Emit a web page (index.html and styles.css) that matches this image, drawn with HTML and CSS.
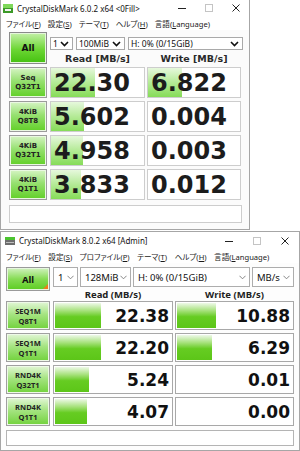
FILE: index.html
```html
<!DOCTYPE html>
<html>
<head>
  <meta charset="UTF-8">
  <title>CrystalDiskMark</title>
  <link rel="stylesheet" href="styles.css">
</head>
<body>
  <!-- CrystalDiskMark 6 -->
  <div class="win win6">
    <div class="titlebar">
      <svg class="appicon" viewBox="0 0 10 9" width="10" height="9">
        <rect x="0" y="0" width="10" height="9" fill="#3c9a28"/>
        <rect x="0" y="0" width="10" height="4" fill="#7fd85a"/>
        <rect x="2" y="5" width="6" height="2" fill="#f2f2f2"/>
      </svg>
      <span class="title">CrystalDiskMark 6.0.2 x64 &lt;0Fill&gt;</span>
      <div class="controls">
        <span class="ctl"><svg viewBox="0 0 8 8" width="8" height="8"><line x1="0" y1="4.5" x2="8" y2="4.5" stroke="#222" stroke-width="1"/></svg></span>
        <span class="ctl"><svg viewBox="0 0 8 8" width="8" height="8"><rect x="0.5" y="0.5" width="7" height="7" fill="none" stroke="#c4c4c4" stroke-width="1"/></svg></span>
        <span class="ctl"><svg viewBox="0 0 8 8" width="8" height="8"><path d="M0.5 0.5 L7.5 7.5 M7.5 0.5 L0.5 7.5" stroke="#222" stroke-width="1"/></svg></span>
      </div>
    </div>
    <div class="menubar menu6">
      <span>ファイル(<u>F</u>)</span>
      <span>設定(<u>S</u>)</span>
      <span>テーマ(<u>T</u>)</span>
      <span>ヘルプ(<u>H</u>)</span>
      <span>言語(<u>L</u>anguage)</span>
    </div>
    <div class="body6">
      <div class="top6">
        <div class="all6">All</div>
        <div class="head6">
          <div class="selects6">
            <div class="sel6 w-count"><span>1</span><svg viewBox="0 0 9 6" width="9" height="6"><polyline points="1,1 4.5,4.5 8,1" fill="none" stroke="#111" stroke-width="1.6"/></svg></div>
            <div class="sel6 w-size"><span>100MiB</span><svg viewBox="0 0 9 6" width="9" height="6"><polyline points="1,1 4.5,4.5 8,1" fill="none" stroke="#111" stroke-width="1.6"/></svg></div>
            <div class="sel6 w-drive"><span>H: 0% (0/15GiB)</span><svg viewBox="0 0 9 6" width="9" height="6"><polyline points="1,1 4.5,4.5 8,1" fill="none" stroke="#111" stroke-width="1.6"/></svg></div>
          </div>
          <div class="cols6">
            <span class="c-read">Read [MB/s]</span>
            <span class="c-write">Write [MB/s]</span>
          </div>
        </div>
      </div>

      <div class="rows6">
        <div class="row6">
          <div class="lbl6">Seq<br>Q32T1</div>
          <div class="val6 c-read"><div class="bar6" style="width:44px"></div><span>22.30</span></div>
          <div class="val6 c-write"><div class="bar6" style="width:34px"></div><span>6.822</span></div>
        </div>
        <div class="row6">
          <div class="lbl6">4KiB<br>Q8T8</div>
          <div class="val6 c-read"><div class="bar6" style="width:33px"></div><span>5.602</span></div>
          <div class="val6 c-write"><span>0.004</span></div>
        </div>
        <div class="row6">
          <div class="lbl6">4KiB<br>Q32T1</div>
          <div class="val6 c-read"><div class="bar6" style="width:32px"></div><span>4.958</span></div>
          <div class="val6 c-write"><span>0.003</span></div>
        </div>
        <div class="row6">
          <div class="lbl6">4KiB<br>Q1T1</div>
          <div class="val6 c-read"><div class="bar6" style="width:30px"></div><span>3.833</span></div>
          <div class="val6 c-write"><span>0.012</span></div>
        </div>
      </div>
      <div class="comment6"></div>
    </div>
  </div>

  <!-- CrystalDiskMark 8 -->
  <div class="win win8">
    <div class="titlebar">
      <svg class="appicon" viewBox="0 0 10 9" width="10" height="9">
        <rect x="0" y="1" width="10" height="8" fill="#6d6d6d"/>
        <rect x="0" y="1" width="10" height="3" fill="#4cc430"/>
        <rect x="1" y="6" width="8" height="1" fill="#bdbdbd"/>
      </svg>
      <span class="title">CrystalDiskMark 8.0.2 x64 [Admin]</span>
      <div class="controls">
        <span class="ctl"><svg viewBox="0 0 8 8" width="8" height="8"><line x1="0" y1="4.5" x2="8" y2="4.5" stroke="#222" stroke-width="1"/></svg></span>
        <span class="ctl"><svg viewBox="0 0 8 8" width="8" height="8"><rect x="0.5" y="0.5" width="7" height="7" fill="none" stroke="#c4c4c4" stroke-width="1"/></svg></span>
        <span class="ctl"><svg viewBox="0 0 8 8" width="8" height="8"><path d="M0.5 0.5 L7.5 7.5 M7.5 0.5 L0.5 7.5" stroke="#222" stroke-width="1"/></svg></span>
      </div>
    </div>
    <div class="menubar menu8">
      <span>ファイル(<u>F</u>)</span>
      <span>設定(<u>S</u>)</span>
      <span>プロファイル(<u>P</u>)</span>
      <span>テーマ(<u>T</u>)</span>
      <span>ヘルプ(<u>H</u>)</span>
      <span>言語(<u>L</u>anguage)</span>
    </div>
    <div class="body8">
      <div class="top8">
        <div class="all8">All<span class="corner"></span></div>
        <div class="head8">
          <div class="selects8">
            <div class="sel8 w-count"><span>1</span><svg viewBox="0 0 8 5" width="7" height="5"><polyline points="0.5,0.5 4,4 7.5,0.5" fill="none" stroke="#777" stroke-width="1"/></svg></div>
            <div class="sel8 w-size"><span>128MiB</span><svg viewBox="0 0 8 5" width="7" height="5"><polyline points="0.5,0.5 4,4 7.5,0.5" fill="none" stroke="#777" stroke-width="1"/></svg></div>
            <div class="sel8 w-drive"><span>H: 0% (0/15GiB)</span><svg viewBox="0 0 8 5" width="7" height="5"><polyline points="0.5,0.5 4,4 7.5,0.5" fill="none" stroke="#777" stroke-width="1"/></svg></div>
            <div class="sel8 w-unit"><span>MB/s</span><svg viewBox="0 0 8 5" width="7" height="5"><polyline points="0.5,0.5 4,4 7.5,0.5" fill="none" stroke="#777" stroke-width="1"/></svg></div>
          </div>
          <div class="cols8">
            <span class="c-read">Read (MB/s)</span>
            <span class="c-write">Write (MB/s)</span>
          </div>
        </div>
      </div>

      <div class="rows8">
        <div class="row8">
          <div class="lbl8">SEQ1M<br>Q8T1</div>
          <div class="val8 c-read"><div class="bar8" style="width:46px"></div><span>22.38</span></div>
          <div class="val8 c-write"><div class="bar8" style="width:39px"></div><span>10.88</span></div>
        </div>
        <div class="row8">
          <div class="lbl8">SEQ1M<br>Q1T1</div>
          <div class="val8 c-read"><div class="bar8" style="width:46px"></div><span>22.20</span></div>
          <div class="val8 c-write"><div class="bar8" style="width:35px"></div><span>6.29</span></div>
        </div>
        <div class="row8">
          <div class="lbl8">RND4K<br>Q32T1</div>
          <div class="val8 c-read"><div class="bar8" style="width:34px"></div><span>5.24</span></div>
          <div class="val8 c-write"><span>0.01</span></div>
        </div>
        <div class="row8">
          <div class="lbl8">RND4K<br>Q1T1</div>
          <div class="val8 c-read"><div class="bar8" style="width:32px"></div><span>4.07</span></div>
          <div class="val8 c-write"><span>0.00</span></div>
        </div>
      </div>
      <div class="comment8"></div>
    </div>
  </div>
</body>
</html>
```

FILE: styles.css
```css
* {
  box-sizing: border-box;
}

body {
  margin: 0;
  width: 300px;
  height: 451px;
  overflow: hidden;
  background: #fff;
  font-family: "Noto Sans", "Noto Sans CJK JP", sans-serif;
  color: #1a1a1a;
}

/* window frame */

.win {
  background: #fff;
  border: 1px solid #a6a6a6;
  display: flex;
  flex-direction: column;
}

.win6 {
  width: 250px;
  height: 230px;
  border-top: none;
}

.win8 {
  width: 300px;
  height: 220px;
  margin-top: 1px;
}

.titlebar {
  display: flex;
  align-items: center;
  height: 16px;
  padding-left: 2px;
}

.win8 .titlebar {
  height: 17px;
  padding-left: 4px;
}

.appicon {
  flex: none;
}

.title {
  font-size: 8px;
  margin-left: 4px;
  color: #111;
}

.controls {
  margin-left: auto;
  display: flex;
  height: 100%;
}

.ctl {
  width: 27px;
  display: flex;
  align-items: center;
  justify-content: center;
}

.win8 .ctl {
  width: 28px;
}

.menubar {
  display: flex;
  align-items: center;
  height: 14px;
  padding-left: 5px;
  font-size: 7.6px;
  font-feature-settings: "palt";
  color: #1a1a1a;
  white-space: nowrap;
}

.menu6 span {
  margin-right: 7px;
}

.menu8 span {
  margin-right: 7.5px;
}

.menubar u {
  text-decoration-thickness: 0.5px;
  text-underline-offset: 1px;
}

/* CrystalDiskMark 6 body */

.body6 {
  flex: 1;
  padding: 2px 0 0 8px;
  background: #fbfbfb;
}

.top6 {
  display: flex;
  gap: 3px;
}

.all6 {
  width: 38px;
  height: 32px;
  display: flex;
  align-items: center;
  justify-content: center;
  font-family: "DejaVu Sans", sans-serif;
  font-weight: bold;
  font-size: 9px;
  color: #111;
  border: 1px solid #8a8a8a;
  box-shadow: inset 0 0 0 1px #e4f6da;
  background: linear-gradient(#c4f0a8, #6cd634 55%, #44c010);
}

.head6 {
  display: flex;
  flex-direction: column;
}

.selects6 {
  display: flex;
  gap: 3px;
  margin-top: 5px;
  height: 13px;
}

.sel6 {
  display: flex;
  align-items: center;
  justify-content: space-between;
  border: 1px solid #a9a9a9;
  background: #fff;
  padding: 0 3px 0 2px;
  font-size: 8.5px;
  color: #111;
}

.selects6 .w-count { width: 23px; }
.selects6 .w-size { width: 49px; }
.selects6 .w-drive { width: 115px; }

.cols6 {
  display: flex;
  gap: 2px;
  height: 16px;
  align-items: center;
  font-family: "DejaVu Sans", sans-serif;
  font-weight: bold;
  font-size: 9.5px;
  color: #2a2a2a;
}

.cols6 span {
  text-align: center;
}

.body6 .c-read { width: 95px; }
.body6 .c-write { width: 94px; }

.rows6 {
  display: flex;
  flex-direction: column;
  gap: 3px;
  margin-top: 1px;
}

.row6 {
  display: flex;
  gap: 2px;
  height: 31px;
}

.lbl6 {
  width: 38px;
  margin-right: 1px;
  display: flex;
  align-items: center;
  justify-content: center;
  text-align: center;
  font-family: "DejaVu Sans", sans-serif;
  font-weight: bold;
  font-size: 7px;
  line-height: 9px;
  color: #222;
  border: 1px solid #9c9c9c;
  box-shadow: inset 0 0 0 1px #eaf8e2;
  background: linear-gradient(#d6f4c4, #96e070 45%, #62d028);
}

.val6 {
  position: relative;
  display: flex;
  align-items: center;
  border: 1px solid #cdcdcd;
  background: #fff;
  padding-left: 3px;
  font-family: "DejaVu Sans", sans-serif;
  font-weight: bold;
  font-size: 24px;
  color: #1c1c1c;
  overflow: hidden;
}

.bar6 {
  position: absolute;
  left: 0;
  top: 0;
  bottom: 0;
  background: linear-gradient(#e6f8dc, #b4ea96 50%, #86dc58);
}

.val6 span {
  position: relative;
}

.comment6 {
  margin-top: 5px;
  width: 233px;
  height: 18px;
  border: 1px solid #cdcdcd;
  background: #fff;
}

/* CrystalDiskMark 8 body */

.body8 {
  flex: 1;
  padding: 4px 0 0 5px;
  background: #fdfdfd;
}

.top8 {
  display: flex;
  gap: 3px;
}

.all8 {
  position: relative;
  width: 44px;
  height: 24px;
  display: flex;
  align-items: center;
  justify-content: center;
  font-weight: bold;
  font-size: 9.5px;
  color: #111;
  border: 1px solid #9a9a9a;
  box-shadow: inset 0 0 0 1px #e6f6de;
  background: linear-gradient(#d2f2c0, #86dc54 50%, #5ccc22);
}

.corner {
  position: absolute;
  right: 1px;
  bottom: 1px;
  width: 0;
  height: 0;
  border-left: 5px solid transparent;
  border-bottom: 5px solid #f07a1c;
}

.head8 {
  display: flex;
  flex-direction: column;
}

.selects8 {
  display: flex;
  gap: 2px;
  height: 20px;
}

.sel8 {
  display: flex;
  align-items: center;
  justify-content: space-between;
  border: 1px solid #adadad;
  background: #fff;
  padding: 0 3px 0 4px;
  font-size: 9.5px;
  color: #111;
  white-space: nowrap;
}

.selects8 .w-count { width: 25px; }
.selects8 .w-size { width: 51px; }
.selects8 .w-drive { width: 117px; }
.selects8 .w-unit { width: 42px; }

.cols8 {
  display: flex;
  gap: 2px;
  height: 14px;
  align-items: center;
  font-weight: bold;
  font-size: 9.5px;
  color: #222;
}

.cols8 span {
  text-align: center;
}

.body8 .c-read { width: 120px; }
.body8 .c-write { width: 119px; }

.rows8 {
  display: flex;
  flex-direction: column;
  gap: 3px;
}

.row8 {
  display: flex;
  gap: 2px;
  height: 29px;
}

.lbl8 {
  width: 44px;
  margin-right: 1px;
  display: flex;
  align-items: center;
  justify-content: center;
  text-align: center;
  font-weight: bold;
  font-size: 7.5px;
  line-height: 10px;
  color: #222;
  border: 1px solid #a0a0a0;
  box-shadow: inset 0 0 0 1px #eef9e8;
  background: linear-gradient(#e2f6d6, #a6e482 45%, #72d23c);
}

.val8 {
  position: relative;
  display: flex;
  align-items: center;
  justify-content: flex-end;
  border: 1px solid #a8a8a8;
  background: #fff;
  padding-right: 3px;
  font-family: "DejaVu Sans", sans-serif;
  font-weight: bold;
  font-size: 17px;
  color: #111;
}

.bar8 {
  position: absolute;
  left: 1px;
  top: 1px;
  bottom: 1px;
  background: linear-gradient(#eef9e8, #a8e27e 30%, #66cc22 55%, #5cc618);
}

.val8 span {
  position: relative;
}

.comment8 {
  margin-top: 4px;
  width: 288px;
  height: 16px;
  border: 1px solid #b4b4b4;
  background: #fff;
}
```
